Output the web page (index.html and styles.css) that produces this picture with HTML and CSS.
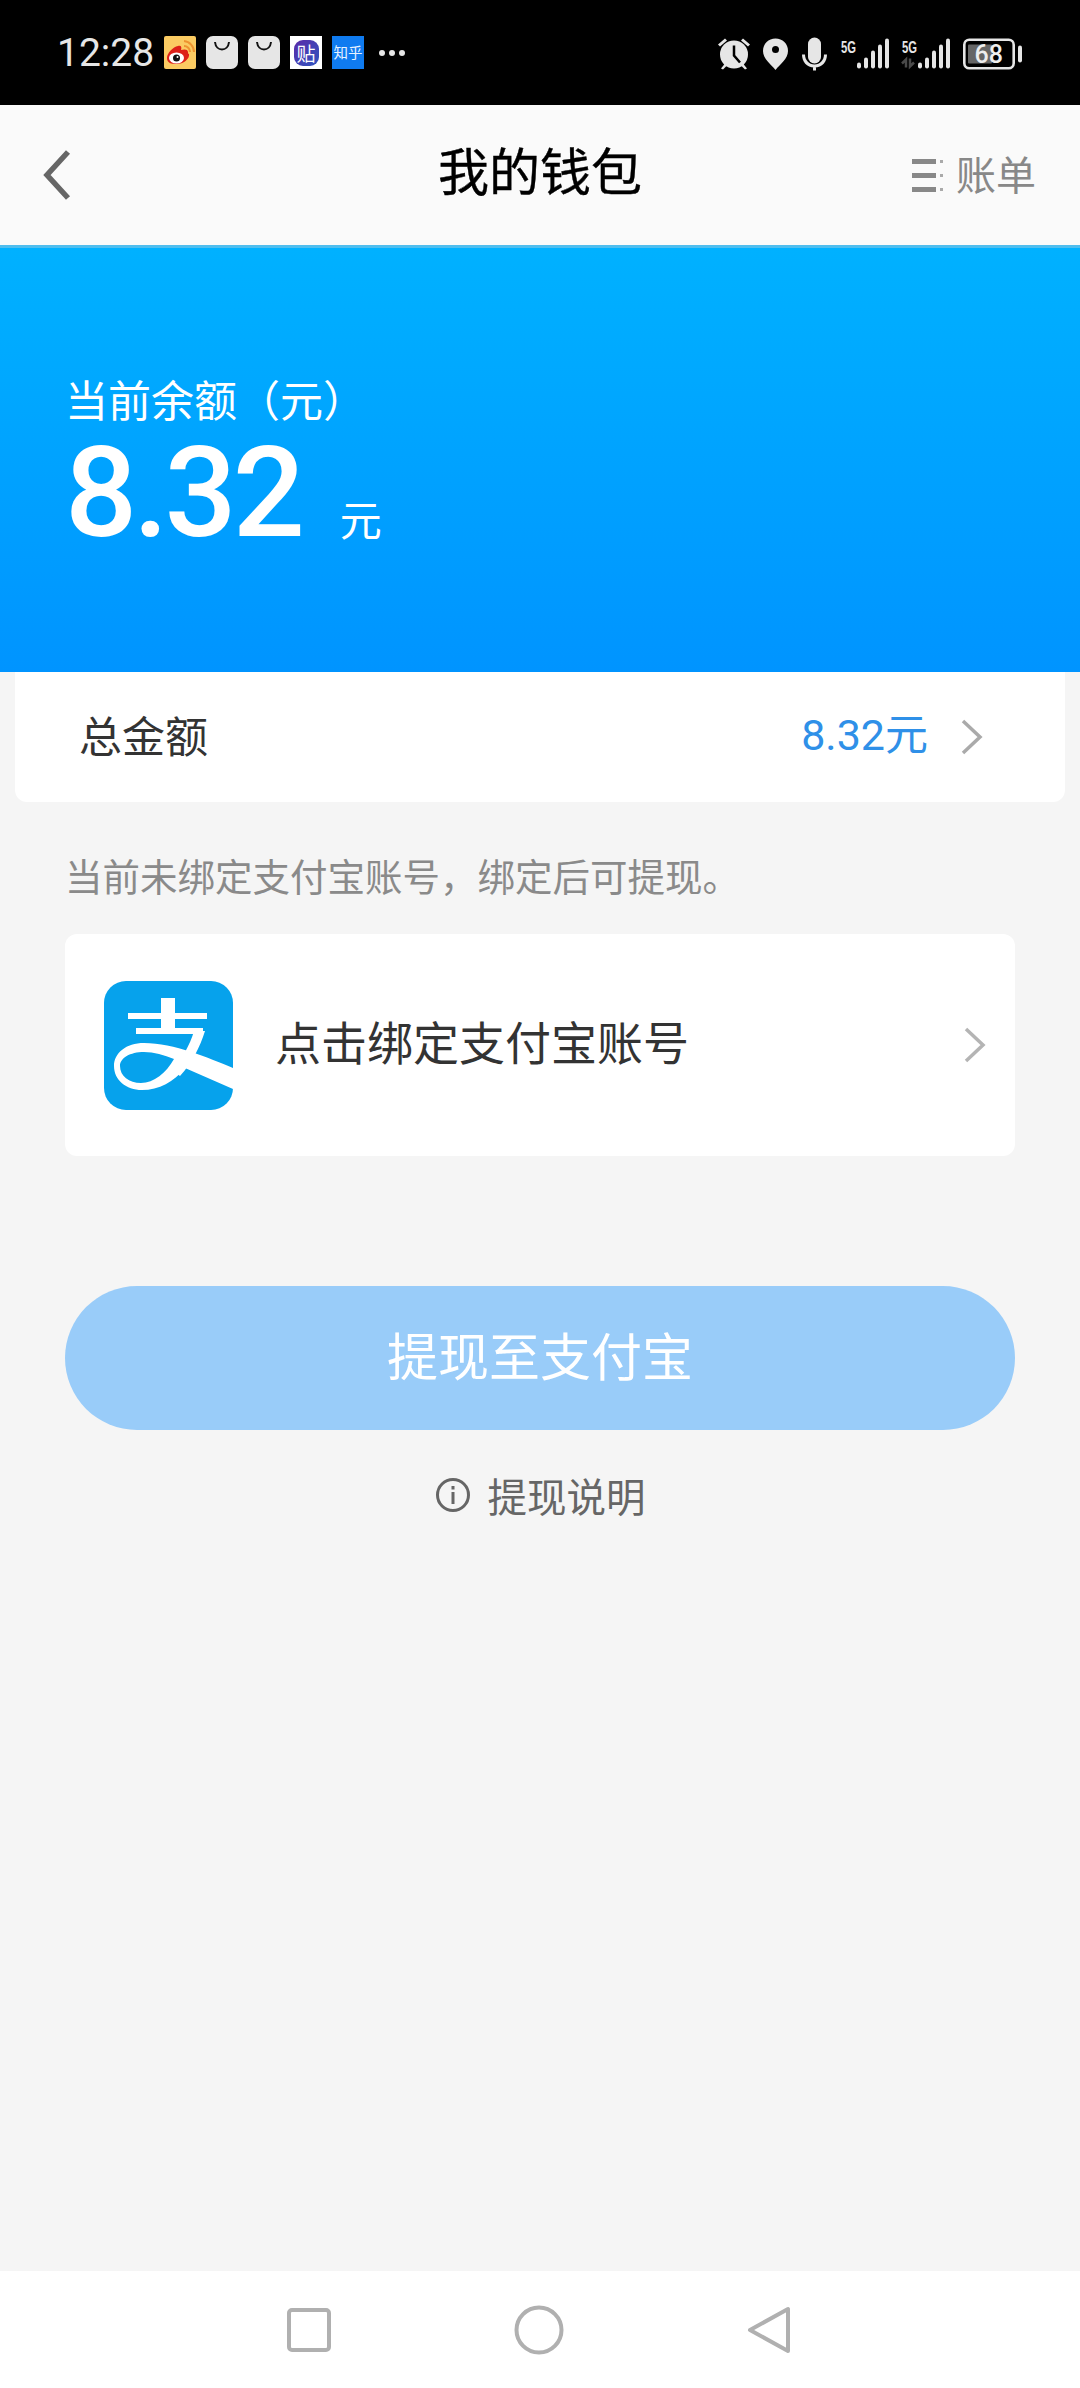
FILE: index.html
```html
<!DOCTYPE html>
<html lang="zh">
<head>
<meta charset="utf-8">
<title>我的钱包</title>
<link rel="stylesheet" href="styles.css">
</head>
<body>
<div class="page">
  <header class="status">
    <div class="status-left">
      <span class="time">12:28</span>
      <div class="notifs">
        <svg class="nicon" viewBox="0 0 32 33"><rect width="32" height="33" rx="2" fill="#fbcb62"/><path d="M3 22c0-5 6-11 11-12 3-1 4 1 3 4 3-1 7-1 7 2 0 1 0 2 1 2 1 5-6 10-12 10S3 27 3 22z" fill="#dd2018"/><ellipse cx="12.500" cy="22" rx="7.500" ry="5.500" fill="#fff"/><circle cx="12.500" cy="22" r="3.500" fill="#111"/><circle cx="13.500" cy="21" r="1" fill="#fff"/><path d="M20 10a6 6 0 0 1 6 6M20 5a11 11 0 0 1 10 11" fill="none" stroke="#ee9330" stroke-width="2"/></svg>
        <svg class="nicon" viewBox="0 0 32 33"><rect width="32" height="33" rx="7" fill="#e6e6e6"/><path d="M9 6c1 10 13 10 14 0" fill="none" stroke="#111" stroke-width="2"/></svg>
        <svg class="nicon" viewBox="0 0 32 33"><rect width="32" height="33" rx="7" fill="#e6e6e6"/><path d="M9 6c1 10 13 10 14 0" fill="none" stroke="#111" stroke-width="2"/></svg>
        <div class="nicon tie"><span class="tie-mark">贴</span></div>
        <div class="nicon zhihu">知乎</div>
      </div>
      <div class="more"><i></i><i></i><i></i></div>
    </div>
    <svg class="status-right" viewBox="710 22.500 320 60" width="320" height="60">
      <g fill="#e6e6e6">
        <circle cx="734" cy="54" r="14"/>
        <path d="M718 44l7-6 2 2-7 6zM750 44l-7-6-2 2 7 6zM721 68l4-5 2 2-4 4zM747 68l-4-5-2 2 4 4z"/>
        <path d="M775.500 38c-7 0-12.500 5-12.500 12.500 0 8 8 13 12.500 19 4.500-6 12.500-11 12.500-19 0-7.500-5.500-12.500-12.500-12.500z"/>
        <rect x="808" y="37" width="13" height="26" rx="6.500"/>
        <path d="M814.500 67c-8 0-12.500-6-12.500-13h3c0 5.500 4 10 9.500 10s9.500-4.500 9.500-10h3c0 7-4.500 13-12.500 13zM813 66h3v4h-3z"/>
        <rect x="857" y="62" width="4" height="6" rx="2"/><rect x="864" y="57" width="4" height="11" rx="2"/><rect x="871" y="50" width="4" height="18" rx="2"/><rect x="878" y="44" width="4" height="24" rx="2"/><rect x="885" y="38" width="4" height="30" rx="2"/>
        <rect x="918" y="62" width="4" height="6" rx="2"/><rect x="925" y="57" width="4" height="11" rx="2"/><rect x="932" y="50" width="4" height="18" rx="2"/><rect x="939" y="44" width="4" height="24" rx="2"/><rect x="946" y="38" width="4" height="30" rx="2"/>
        <rect x="1018" y="45" width="4" height="17" rx="2"/>
      </g>
      <circle cx="775.500" cy="49" r="3.500" fill="#000"/>
      <path d="M734 45v10l6 7" fill="none" stroke="#000" stroke-width="2.500"/>
      <text class="five-g" x="841" y="52" textLength="15" lengthAdjust="spacingAndGlyphs">5G</text>
      <text class="five-g" x="902" y="52" textLength="15" lengthAdjust="spacingAndGlyphs">5G</text>
      <path d="M906 67v-8l-4 4M910 58v8l4-4" fill="none" stroke="#4a4a4a" stroke-width="2.500"/>
      <rect x="964.300" y="39.300" width="49.400" height="28.400" rx="5" fill="none" stroke="#e6e6e6" stroke-width="2.600"/>
      <rect x="968" y="44" width="24" height="19" rx="1" fill="#666"/>
      <text class="batt" x="974.500" y="62">68</text>
    </svg>
  </header>

  <nav class="topbar">
    <svg class="back" viewBox="0 0 30 52" width="30" height="52"><path d="M26 3L5 26l21 23" fill="none" stroke="#666" stroke-width="5.500"/></svg>
    <h1 class="title">我的钱包</h1>
    <div class="bill">
      <svg class="bill-icon" viewBox="0 0 32 36" width="32" height="36"><path d="M0 2h24v5H0zM0 16h24v5H0zM0 30h24v5H0z" fill="#888"/><path d="M28 3h3v3h-3zM28 17h3v3h-3zM28 31h3v3h-3z" fill="#aaa"/></svg>
      <span>账单</span>
    </div>
  </nav>

  <section class="hero">
    <div class="hero-label">当前余额（元）</div>
    <div class="hero-amount"><span class="amount">8.32</span><span class="unit">元</span></div>
  </section>

  <main class="main">
    <div class="total">
      <span class="total-label">总金额</span>
      <span class="total-value">8.32元</span>
      <svg class="chev" viewBox="0 0 24 38" width="24" height="38"><path d="M3 3l17 16L3 35" fill="none" stroke="#aaa" stroke-width="3.500"/></svg>
    </div>
    <p class="note">当前未绑定支付宝账号，绑定后可提现。</p>
    <div class="bind">
      <svg class="ali" viewBox="0 0 129 129" width="129" height="129">
        <rect width="129" height="129" rx="22" fill="#06a2ec"/>
        <g fill="#fff">
          <rect x="24" y="32" width="79" height="6"/>
          <rect x="32" y="47" width="67" height="6"/>
          <rect x="57" y="17" width="14" height="34"/>
          <path fill-rule="evenodd" d="M129 87C105 77 70 62 40 62 22 62 10 72 10 85c0 14 12 24 28 24 17 0 32-8 43-22l48 21zM40 71c10 0 20 3 30 7-8 14-20 24-33 24-12 0-21-7-21-17 0-8 10-14 24-14z"/>
          <path d="M90 50h11C96 66 88 82 76 95l-8-6c10-11 18-25 22-39z"/>
        </g>
      </svg>
      <span class="bind-text">点击绑定支付宝账号</span>
      <svg class="chev" viewBox="0 0 24 38" width="24" height="38"><path d="M3 3l17 16L3 35" fill="none" stroke="#b4b4b4" stroke-width="3.500"/></svg>
    </div>
    <div class="withdraw">提现至支付宝</div>
    <div class="explain">
      <svg class="info" viewBox="0 0 36 36" width="36" height="36"><circle cx="18" cy="18" r="15.500" fill="none" stroke="#666" stroke-width="3"/><path d="M16.500 9h3v3.500h-3zM16.500 15h3v12h-3z" fill="#666"/></svg>
      <span>提现说明</span>
    </div>
  </main>

  <footer class="navbar">
    <svg viewBox="0 0 46 46" width="46" height="46"><rect x="3" y="3" width="40" height="40" rx="3" fill="none" stroke="#b0b0b0" stroke-width="4"/></svg>
    <svg viewBox="0 0 52 52" width="52" height="52"><circle cx="26" cy="26" r="22.500" fill="none" stroke="#b0b0b0" stroke-width="4"/></svg>
    <svg viewBox="0 0 46 52" width="46" height="52"><path d="M42 5v42L4 26z" fill="none" stroke="#b0b0b0" stroke-width="4" stroke-linejoin="round"/></svg>
  </footer>
</div>
</body>
</html>
```
FILE: styles.css
```css
* { box-sizing: border-box; margin: 0; padding: 0; }
html, body { width: 1080px; height: 2388px; overflow: hidden; }
body { font-family: "Noto Sans CJK SC", "Noto Sans", sans-serif; background: #f5f5f5; }
.page { display: flex; flex-direction: column; height: 2388px; }

.status { flex: 0 0 105px; background: #000; display: flex; align-items: center; justify-content: space-between; padding: 0 50px 0 57px; }
.status-left { display: flex; align-items: center; }
.time { font-family: Roboto, sans-serif; font-size: 39px; line-height: 48px; color: #e6e6e6; width: 107px; }
.notifs { display: flex; gap: 10px; }
.nicon { width: 32px; height: 33px; display: block; }
.tie { background: #fff; display: flex; align-items: center; justify-content: center; }
.tie-mark { width: 25px; height: 26px; border-radius: 9px; background: linear-gradient(135deg, #5a2aa8, #2f55c0); color: #fff; font-size: 19px; line-height: 25px; text-align: center; }
.zhihu { background: #0f7bf0; color: #e8f2ff; font-size: 14.500px; line-height: 32px; text-align: center; white-space: nowrap; }
.more { display: flex; gap: 4px; margin-left: 15px; }
.more i { width: 6px; height: 6px; border-radius: 50%; background: #e6e6e6; }
.status-right { display: block; }
.five-g { font-family: "Liberation Sans", sans-serif; font-weight: 700; font-size: 16px; fill: #e6e6e6; }
.batt { font-family: Roboto, sans-serif; font-weight: 500; font-size: 25px; fill: #eee; }

.topbar { flex: 0 0 140px; background: #fafafa; display: flex; align-items: center; padding: 0 44px 0 42px; position: relative; }
.back { display: block; }
.title { position: absolute; left: 0; right: 0; top: 34px; text-align: center; font-size: 51px; line-height: 60px; font-weight: 400; color: #000; -webkit-text-stroke: 0.4px #000; }
.bill { margin-left: auto; display: flex; align-items: center; gap: 12px; font-size: 40px; line-height: 48px; color: #888; }
.bill span { padding-bottom: 5px; }
.bill-icon { display: block; }

.hero { flex: 0 0 427px; background: linear-gradient(180deg, #00b1ff 0%, #0094ff 100%); border-top: 3px solid #4fbdee; padding: 125px 0 0 65px; color: #fff; }
.hero-label { font-size: 43px; line-height: 50px; color: #fff; }
.hero-amount { display: flex; align-items: baseline; margin-top: 11px; }
.amount { font-family: Roboto, sans-serif; font-size: 127px; line-height: 118px; font-weight: 500; letter-spacing: -4px; }
.unit { font-size: 42px; line-height: 50px; margin-left: 39px; }

.main { flex: 1 1 auto; display: flex; flex-direction: column; }
.total { margin: 0 15px; height: 130px; background: #fff; border-radius: 0 0 12px 12px; display: flex; align-items: center; padding: 0 81px 0 66px; }
.total-label { font-size: 43px; line-height: 56px; padding-bottom: 6px; color: #333; margin-right: auto; margin-left: -2px; }
.total-value { font-family: Roboto, "Noto Sans CJK SC", sans-serif; font-size: 43px; line-height: 56px; padding-bottom: 4px; color: #2f90e8; margin-right: 32px; }
.chev { display: block; flex: none; }
.note { margin: 48px 0 0 65px; font-size: 37.500px; line-height: 50px; color: #8a8a8a; }
.bind { margin: 34px 65px 0; height: 222px; background: #fff; border-radius: 12px; display: flex; align-items: center; padding: 0 25px 0 39px; }
.bind-text { font-size: 46px; line-height: 60px; padding-bottom: 11px; color: #333; margin-left: 42px; margin-right: auto; }
.bind .chev { margin-right: 3px; }
.withdraw { margin: 130px 65px 0; height: 144px; border-radius: 72px; background: #99ccf9; color: #fff; font-size: 51px; line-height: 136px; text-align: center; }
.explain { margin-top: 40px; display: flex; justify-content: center; align-items: center; gap: 17px; font-size: 39.500px; line-height: 50px; color: #666; }
.info { display: block; }

.navbar { flex: 0 0 117px; background: #fff; display: flex; align-items: center; padding: 0 288px 0 286px; justify-content: space-between; }
```
